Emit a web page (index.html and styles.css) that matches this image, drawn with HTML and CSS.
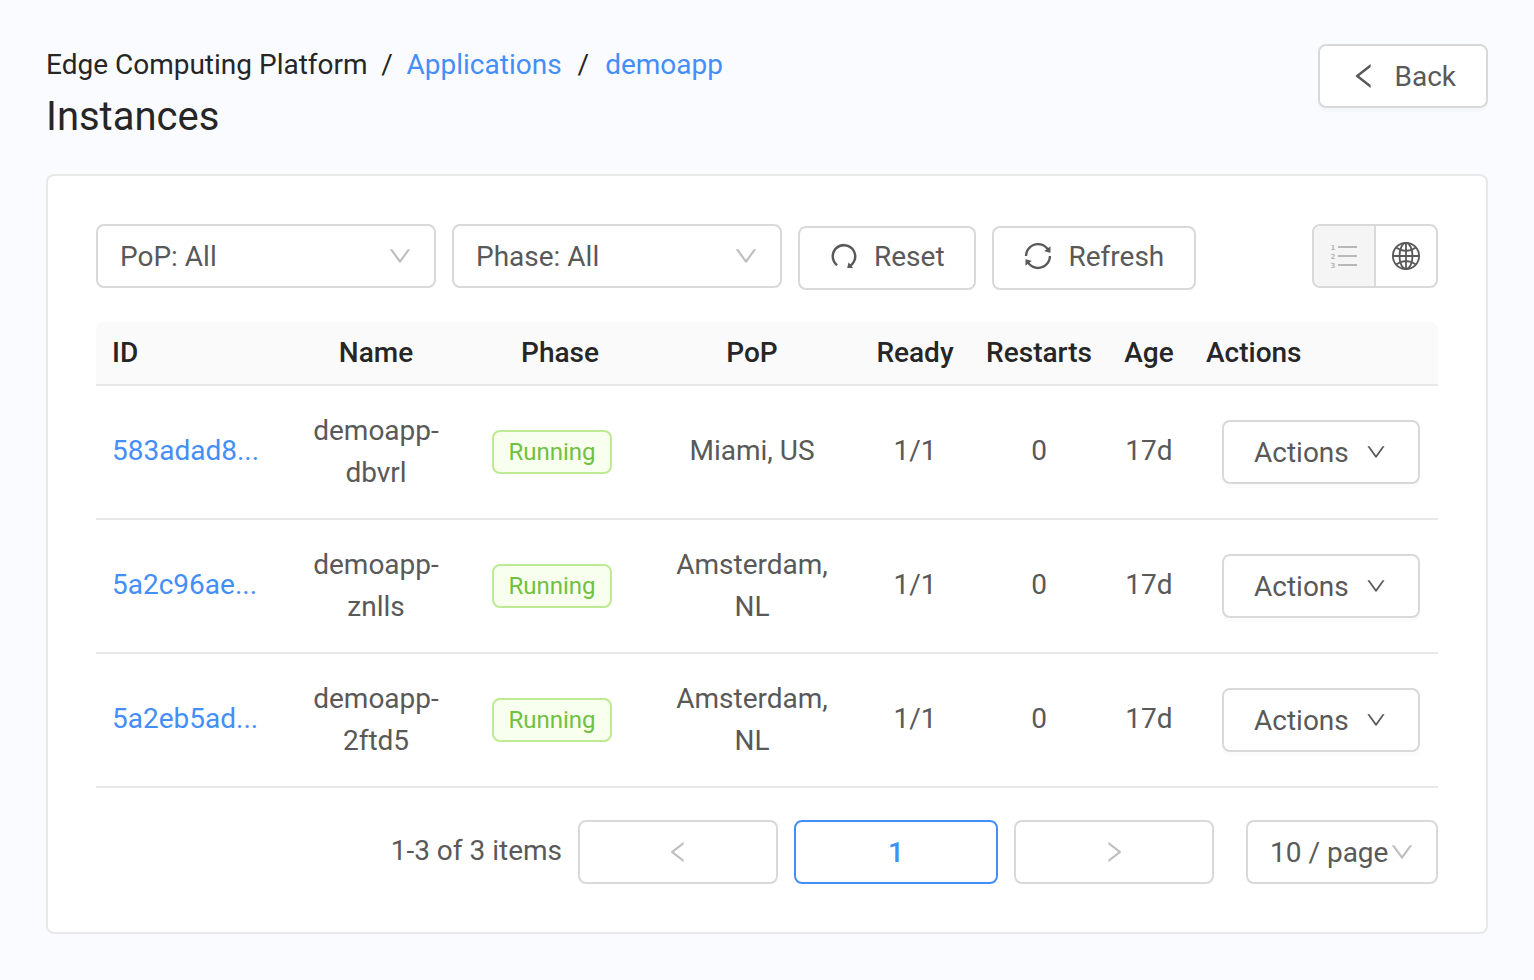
FILE: index.html
```html
<!DOCTYPE html>
<html lang="en">
<head>
<meta charset="utf-8">
<title>Instances</title>
<link rel="stylesheet" href="styles.css">
</head>
<body>
<svg class="sprite" aria-hidden="true">
  <symbol id="down" viewBox="64 64 896 896"><path d="M884 256h-75c-5.1 0-9.9 2.5-12.9 6.6L512 654.2 227.9 262.6c-3-4.1-7.8-6.6-12.9-6.6h-75c-6.5 0-10.3 7.4-6.5 12.7l352.6 486.1c12.8 17.6 39 17.6 51.7 0l352.6-486.1c3.9-5.3.1-12.7-6.4-12.7z"/></symbol>
  <symbol id="left" viewBox="64 64 896 896"><path d="M724 218.3V141c0-6.7-7.7-10.4-12.9-6.3L260.3 486.8a31.86 31.86 0 000 50.3l450.8 352.1c5.3 4.1 12.9.4 12.9-6.3v-77.3c0-4.9-2.3-9.6-6.1-12.6l-360-281 360-281.1c3.8-3 6.1-7.7 6.1-12.6z"/></symbol>
  <symbol id="right" viewBox="64 64 896 896"><path d="M765.7 486.8L314.9 134.7A7.97 7.97 0 00302 141v77.3c0 4.9 2.3 9.6 6.1 12.6l360 281.1-360 281.1c-3.9 3-6.1 7.7-6.1 12.6V883c0 6.7 7.7 10.4 12.9 6.3l450.8-352.1a31.96 31.96 0 000-50.4z"/></symbol>
  <symbol id="redo" viewBox="64 64 896 896"><path d="M758.2 839.1C851.8 765.9 912 651.9 912 523.9 912 303 733.5 124.3 512.6 124 291.4 123.7 112 302.8 112 523.9c0 125.2 57.5 236.9 147.6 310.2 3.5 2.8 8.6 2.2 11.4-1.3l39.4-50.5c2.7-3.4 2.1-8.3-1.2-11.1-8.1-6.6-15.9-13.7-23.4-21.2a318.64 318.64 0 01-68.6-101.7C200.4 609 192 567.1 192 523.9s8.4-85.1 25.1-124.5c16.1-38.1 39.2-72.3 68.6-101.7 29.4-29.4 63.6-52.5 101.7-68.6C426.9 212.4 468.8 204 512 204s85.1 8.4 124.5 25.1c38.1 16.1 72.3 39.2 101.7 68.6 29.4 29.4 52.5 63.6 68.6 101.7 16.7 39.4 25.1 81.3 25.1 124.5s-8.4 85.1-25.1 124.5a318.64 318.64 0 01-68.6 101.7c-9.3 9.3-19.1 18-29.3 26L668.2 724a8 8 0 00-14.1 3l-39.6 162.2c-1.2 5 2.6 9.9 7.7 9.9l167 .8c6.7 0 10.5-7.7 6.3-12.9l-37.3-47.9z"/></symbol>
  <symbol id="sync" viewBox="64 64 896 896"><path d="M168 504.2c1-43.7 10-86.1 26.9-126 17.3-41 42.1-77.7 73.7-109.4S337 212.3 378 195c42.4-17.9 87.4-27 133.9-27s91.5 9.1 133.8 27A341.5 341.5 0 01755 268.8c9.9 9.9 19.2 20.4 27.8 31.4l-60.2 47a8 8 0 003 14.1l175.7 43c5 1.2 9.9-2.6 9.9-7.7l.8-180.9c0-6.7-7.7-10.5-12.9-6.3l-56.4 44.1C765.8 155.1 646.2 92 511.8 92 282.7 92 96.3 275.6 92 503.8a8 8 0 008 8.2h60c4.4 0 7.9-3.5 8-7.8zm756 7.8h-60c-4.4 0-7.9 3.5-8 7.8-1 43.7-10 86.1-26.9 126-17.3 41-42.1 77.8-73.7 109.4A342.45 342.45 0 01512.1 856a342.24 342.24 0 01-243.2-100.8c-9.9-9.9-19.2-20.4-27.8-31.4l60.2-47a8 8 0 00-3-14.1l-175.7-43c-5-1.2-9.9 2.6-9.9 7.7l-.7 181c0 6.7 7.7 10.5 12.9 6.3l56.4-44.1C258.2 868.9 377.8 932 512.2 932c229.2 0 415.5-183.7 419.8-411.8a8 8 0 00-8-8.2z"/></symbol>
</svg>
<header class="page-head">
  <div>
    <nav class="crumbs"><span>Edge Computing Platform</span><span class="sep first">/</span><a>Applications</a><span class="sep">/</span><a>demoapp</a></nav>
    <h1 class="title">Instances</h1>
  </div>
  <button class="btn back"><svg class="icon"><use href="#left"/></svg><span>Back</span></button>
</header>
<main class="card">
  <div class="toolbar">
    <div class="select pop"><span>PoP: All</span><svg class="arrow"><use href="#down"/></svg></div>
    <div class="select phase"><span>Phase: All</span><svg class="arrow"><use href="#down"/></svg></div>
    <button class="btn tool reset"><svg class="icon"><use href="#redo"/></svg><span>Reset</span></button>
    <button class="btn tool refresh"><svg class="icon"><use href="#sync"/></svg><span>Refresh</span></button>
    <div class="toggle">
      <div class="side list"><svg class="icon" viewBox="0 0 28 28"><path d="M8 4h19v2H8zM8 13h19v2H8zM8 22h19v2H8z"/><g class="nums"><text x="0.6" y="7.700">1</text><text x="0.6" y="16.700">2</text><text x="0.6" y="25.700">3</text></g></svg></div>
      <div class="side map"><svg class="icon globe" viewBox="0 0 28 28"><circle cx="14" cy="14" r="13.1"/><ellipse cx="14" cy="14" rx="6.5" ry="13.1"/><path d="M14 1v26M1 14h26M4 5.5Q14 12.500 24 5.500M4 22.500Q14 15.500 24 22.500"/></svg></div>
    </div>
  </div>
  <table class="grid">
    <colgroup><col class="c-id"><col class="c-name"><col class="c-phase"><col class="c-pop"><col class="c-ready"><col class="c-restarts"><col class="c-age"><col class="c-actions"></colgroup>
    <thead><tr><th class="start">ID</th><th>Name</th><th>Phase</th><th>PoP</th><th>Ready</th><th>Restarts</th><th>Age</th><th class="start">Actions</th></tr></thead>
    <tbody>
      <tr><td class="start"><a>583adad8...</a></td><td class="two">demoapp-<br>dbvrl</td><td class="start"><span class="tag">Running</span></td><td>Miami, US</td><td>1/1</td><td>0</td><td>17d</td><td class="act"><button class="btn menu"><span>Actions</span><svg class="caret"><use href="#down"/></svg></button></td></tr>
      <tr><td class="start"><a>5a2c96ae...</a></td><td class="two">demoapp-<br>znlls</td><td class="start"><span class="tag">Running</span></td><td class="two">Amsterdam,<br>NL</td><td>1/1</td><td>0</td><td>17d</td><td class="act"><button class="btn menu"><span>Actions</span><svg class="caret"><use href="#down"/></svg></button></td></tr>
      <tr><td class="start"><a>5a2eb5ad...</a></td><td class="two">demoapp-<br>2ftd5</td><td class="start"><span class="tag">Running</span></td><td class="two">Amsterdam,<br>NL</td><td>1/1</td><td>0</td><td>17d</td><td class="act"><button class="btn menu"><span>Actions</span><svg class="caret"><use href="#down"/></svg></button></td></tr>
    </tbody>
  </table>
  <footer class="pager">
    <span class="total">1-3 of 3 items</span>
    <div class="page step"><svg class="arrow"><use href="#left"/></svg></div>
    <div class="page current"><span>1</span></div>
    <div class="page step"><svg class="arrow"><use href="#right"/></svg></div>
    <div class="select size"><span>10 / page</span><svg class="arrow"><use href="#down"/></svg></div>
  </footer>
</main>
</body>
</html>
```
FILE: styles.css
```css
* { box-sizing: border-box; }
body {
  margin: 0;
  padding: 44px 46px 46px;
  height: 980px;
  background: #fafbff;
  color: #595959;
  font: 28px/42px Roboto, sans-serif;
}
.sprite { display: none; }
svg { fill: currentColor; flex: none; display: block; }
a { color: #448ef7; }
.icon { width: 28px; height: 28px; }
.arrow { width: 24px; height: 24px; color: #bfbfbf; }
.caret { width: 20px; height: 20px; }

.page-head { display: flex; justify-content: space-between; align-items: flex-start; height: 130px; color: #262626; }
.crumbs { display: flex; white-space: nowrap; }
.sep { margin: 0 16px; }
.first { margin: 0 13.7px; }
.title { margin: 4px 0 0; font-size: 40px; line-height: 54px; font-weight: 400; }

.btn {
  display: flex;
  align-items: center;
  height: 64px;
  margin: 0;
  padding: 0 30px;
  border: 2px solid #d9d9d9;
  border-radius: 8px;
  background: #fff;
  color: #595959;
  font: inherit;
  white-space: nowrap;
  box-shadow: 0 4px 0 rgba(0, 0, 0, .016);
}
.btn span, .select span, .current span { padding-top: 2px; }
.back { width: 170px; gap: 16.5px; }

.card {
  height: 760px;
  padding: 48px;
  border: 2px solid #e8e8e8;
  border-radius: 8px;
  background: #fff;
}
.toolbar { display: flex; align-items: flex-start; gap: 16px; height: 98px; }
.select {
  display: flex;
  align-items: center;
  justify-content: space-between;
  height: 64px;
  padding: 0 22px;
  border: 2px solid #d9d9d9;
  border-radius: 8px;
  white-space: nowrap;
}
.pop { width: 340px; }
.phase { width: 330px; }
.tool { margin-top: 2px; padding-bottom: 4px; gap: 16px; box-shadow: none; }
.reset { width: 178px; }
.refresh { width: 204px; gap: 16.5px; }
.toggle {
  display: flex;
  width: 126px;
  height: 64px;
  margin-left: auto;
  border: 2px solid #d9d9d9;
  border-radius: 8px;
  overflow: hidden;
}
.side { flex: 1; display: flex; align-items: center; justify-content: center; }
.list { background: #f5f5f5; color: #b8b8b8; border-right: 2px solid #d9d9d9; }
.nums { font: 700 7px "DejaVu Sans", sans-serif; }
.globe { fill: none; stroke: #595959; stroke-width: 1.8; }

.grid { width: 1342px; table-layout: fixed; border-collapse: separate; border-spacing: 0; }
.c-id { width: 180px; }
.c-name { width: 200px; }
.c-phase { width: 168px; }
.c-pop { width: 216px; }
.c-ready { width: 110px; }
.c-restarts { width: 138px; }
.c-age { width: 82px; }
.c-actions { width: 248px; }
.grid th {
  height: 64px;
  padding: 0;
  background: #fafafa;
  border-bottom: 2px solid #e8e8e8;
  color: #262626;
  font-weight: 500;
  text-align: center;
}
.grid th:first-child { border-top-left-radius: 8px; }
.grid th:last-child { border-top-right-radius: 8px; }
.grid td { height: 134px; padding: 0 0 2px; border-bottom: 2px solid #e8e8e8; text-align: center; vertical-align: middle; }
.grid .two { padding-bottom: 0; }
.grid .start { padding-left: 16px; text-align: left; }
.grid .act { padding: 0 0 0 32px; }
.tag {
  display: block;
  width: 120px;
  height: 44px;
  margin-top: 2px;
  border: 2px solid #beea93;
  border-radius: 8px;
  background: #f8ffee;
  color: #70c140;
  font-size: 24px;
  line-height: 40px;
  text-align: center;
}
.menu { width: 198px; gap: 17px; }

.pager { display: flex; justify-content: flex-end; align-items: center; gap: 16px; margin-top: 32px; height: 64px; }
.total { padding-bottom: 2px; white-space: nowrap; }
.page { display: flex; align-items: center; justify-content: center; width: 200px; height: 64px; border: 2px solid #d9d9d9; border-radius: 8px; }
.current { width: 204px; border-color: #448ef7; color: #448ef7; font-weight: 500; }
.size { width: 192px; margin-left: 16px; }
```
